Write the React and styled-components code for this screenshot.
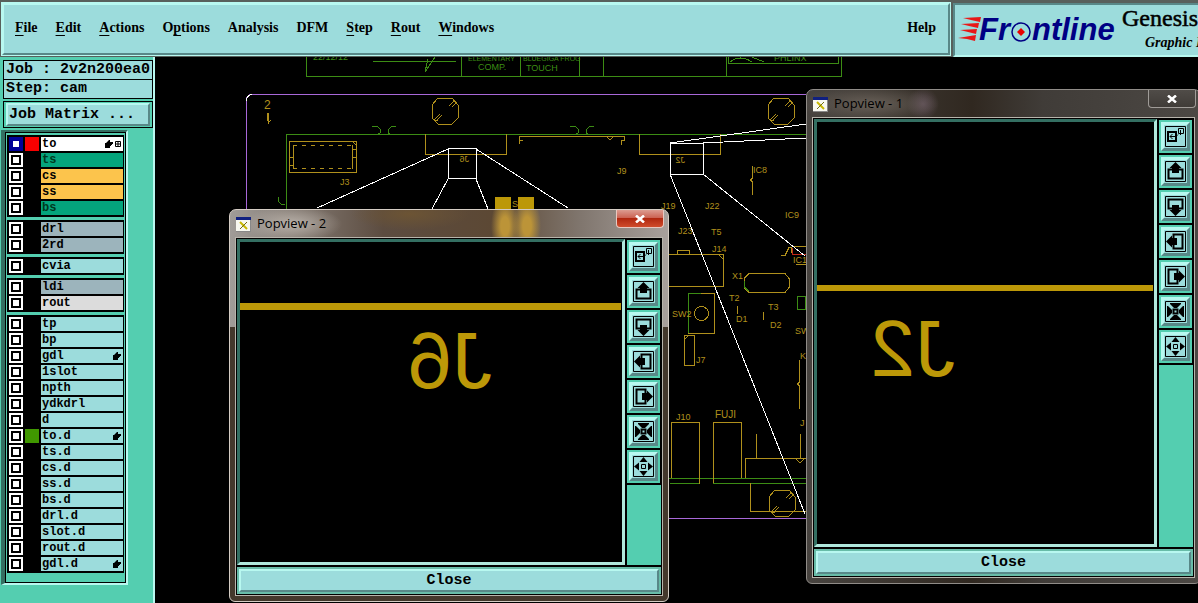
import React from 'react';
import styled, { createGlobalStyle, css } from 'styled-components';

const c = {
  teal: '#54ceb0',
  aqua: '#9cdcdc',
  dark: '#346f62',
  shade: '#588888',
  light: '#b8f8f0',
  gold: '#bc9808',
  wire: '#b0901c',
  green: '#3c8c14',
  purple: '#a868d8',
};
const mono = '"Liberation Mono", "DejaVu Sans Mono", monospace';
const serif = '"Liberation Serif", "DejaVu Serif", serif';

const Global = createGlobalStyle`
  *, *::before, *::after { box-sizing: border-box; }
  body { margin: 0; background: #000; color: #000; }
  button, input { font: inherit; color: inherit; margin: 0; padding: 0; border: 0; border-radius: 0; }
  h1, h2, p, ul { margin: 0; padding: 0; font-weight: inherit; }
`;

const bevel = css`
  border: 2px solid;
  border-color: ${c.light} ${c.shade} ${c.shade} ${c.light};
`;

const Page = styled.div`
  display: flex;
  flex-direction: column;
  height: 100vh;
  overflow: hidden;
`;

/* ---------- header ---------- */
const Header = styled.header`
  display: flex;
  flex: none;
  height: 57px;
  padding: 3px 0 0 2px;
  background: #58605c;
`;
const MenuBar = styled.nav`
  ${bevel}
  display: flex;
  flex: 1;
  align-items: center;
  gap: 18px;
  padding: 0 12px 2px 11px;
  margin-bottom: 2px;
  outline: 1px solid ${c.light};
  background: ${c.aqua};
`;
const MenuButton = styled.button`
  background: none;
  font: bold 14px/20px ${serif};
  margin-left: ${(p) => (p.$end ? 'auto' : '0')};
  -webkit-text-stroke: 0;
  u { text-underline-offset: 3px; text-decoration-thickness: 1px; }
`;
const Brand = styled.div`
  display: flex;
  flex: none;
  width: 245px;
  overflow: hidden;
  margin-left: 3px;
  border: solid;
  border-width: 2px 0 2px 2px;
  border-color: ${c.shade} transparent ${c.light} ${c.shade};
  background: ${c.aqua};
  svg { flex: none; }
`;
const Product = styled.div`
  white-space: nowrap;
  padding-left: 3px;
  h1 { font: 24px/26px ${serif}; -webkit-text-stroke: 0.5px #000; }
  p { padding-left: 23px; font: italic bold 14px/24px ${serif}; }
`;

/* ---------- sidebar ---------- */
const Body = styled.div`
  display: flex;
  flex: 1;
  min-height: 0;
`;
const Sidebar = styled.aside`
  display: flex;
  flex-direction: column;
  flex: none;
  width: 155px;
  padding: 3px 0 0 3px;
  border-right: 2px solid ${c.light};
  background: ${c.teal};
`;
const Info = styled.p`
  height: 20px;
  margin: 0 0 -1px;
  padding-left: 2px;
  border: 1px solid #000;
  background: ${c.aqua};
  font: bold 15px/18px ${mono};
  white-space: nowrap;
`;
const MatrixFrame = styled.div`
  margin-top: 3px;
  padding: 1px 2px;
  border: 1px solid #000;
`;
const MatrixButton = styled.button`
  ${bevel}
  display: block;
  width: 100%;
  height: 23px;
  padding-left: 1px;
  background: ${c.aqua};
  font: bold 15px/18px ${mono};
  text-align: left;
`;
const LayerPanel = styled.section`
  display: flex;
  flex-direction: column;
  gap: 3px;
  width: 127px;
  margin: 2px 0 0 -2px;
  padding: 3px 2px 10px;
  border: solid;
  border-width: 2px 2px 2px 4px;
  border-color: ${c.dark} ${c.light} ${c.light} ${c.dark};
  box-shadow: inset -1px -1px #000, inset 1px 1px #000;
`;
const LayerGroup = styled.ul`
  padding: 1px 1px 1px 2px;
  background: #000;
  list-style: none;
`;
const LayerRow = styled.li`
  display: flex;
  gap: 2px;
  height: 16px;
  padding: 1px 0;
`;
const Tick = styled.input.attrs({ type: 'checkbox' })`
  appearance: none;
  flex: none;
  width: 14px;
  height: 14px;
  border: 2px solid ${(p) => (p.$active ? '#000098' : '#fff')};
  background: #fff;
  box-shadow: inset 0 0 0 2px ${(p) => (p.$active ? '#000098' : '#000')};
`;
const Swatch = styled.span`
  flex: none;
  width: 14px;
  background: ${(p) => p.$color || '#000'};
`;
const LayerName = styled.label`
  display: flex;
  flex: 1;
  align-items: center;
  gap: 2px;
  padding: 0 2px 0 1px;
  background: ${(p) => p.$color || c.aqua};
  color: ${(p) => (p.$color === '#04a47c' ? '#003820' : '#000')};
  font: bold 12px/14px ${mono};
  span { flex: 1; }
`;

const groups = [
  [
    { name: 'to', color: '#fff', swatch: '#f80000', hand: true, grid: true, active: true },
    { name: 'ts', color: '#04a47c' },
    { name: 'cs', color: '#fcc44c' },
    { name: 'ss', color: '#fcc44c' },
    { name: 'bs', color: '#04a47c' },
  ],
  [{ name: 'drl', color: '#9cb4bc' }, { name: '2rd', color: '#9cb4bc' }],
  [{ name: 'cvia' }],
  [{ name: 'ldi', color: '#9cb4bc' }, { name: 'rout', color: '#dcdcdc' }],
  [
    { name: 'tp' }, { name: 'bp' }, { name: 'gdl', hand: true }, { name: '1slot' },
    { name: 'npth' }, { name: 'ydkdrl' }, { name: 'd' },
    { name: 'to.d', swatch: '#409800', hand: true },
    { name: 'ts.d' }, { name: 'cs.d' }, { name: 'ss.d' }, { name: 'bs.d' },
    { name: 'drl.d' }, { name: 'slot.d' }, { name: 'rout.d' }, { name: 'gdl.d', hand: true },
  ],
];

const Hand = () => (
  <svg width="8" height="8" viewBox="0 0 8 8" aria-hidden="true">
    <path d="M0 3h1l3-3h1v2h3v2H7v1H6v1H5v2H0z" />
  </svg>
);
const Grid = () => (
  <svg width="6" height="6" viewBox="0 0 6 6" aria-hidden="true">
    <path d="M.5.5h5v5h-5zM3 0v6M0 3h6" fill="none" stroke="#000" />
  </svg>
);

function Layer({ layer }) {
  const id = `layer-${layer.name}`;
  return (
    <LayerRow>
      <Tick id={id} $active={layer.active} />
      <Swatch $color={layer.swatch} />
      <LayerName htmlFor={id} $color={layer.color}>
        <span>{layer.name}</span>
        {layer.hand && <Hand />}
        {layer.grid && <Grid />}
      </LayerName>
    </LayerRow>
  );
}

/* ---------- workspace ---------- */
const Workspace = styled.main`
  position: relative;
  flex: 1;
  min-width: 0;
  overflow: hidden;
  background: #000;
`;
const Board = styled.svg`
  display: block;
  width: 100%;
  height: 100%;
  fill: none;
  stroke: ${c.wire};
  shape-rendering: crispEdges;
  text {
    fill: ${c.wire};
    stroke: none;
    font: 9px "Liberation Sans", sans-serif;
  }
  .green { stroke: ${c.green}; }
  text.green { fill: ${c.green}; stroke: none; }
  text.small { font-size: 7px; }
  .white { stroke: #fff; }
  .purple { stroke: ${c.purple}; }
`;

const labels = [
  ['2', 264, 109, 12], ['J3', 340, 185], ['J9', 617, 174], ['IC8', 753, 173], ['IC9', 785, 218],
  ['J22', 705, 209], ['J19', 661, 209], ['J23', 678, 234], ['T5', 711, 235], ['J14', 712, 252],
  ['X1', 732, 279], ['T2', 729, 301], ['T3', 768, 310], ['D1', 736, 322], ['D2', 770, 328],
  ['SW2', 672, 317], ['J7', 696, 363], ['SW', 795, 334], ['IC11', 793, 263], ['K', 800, 359],
  ['J', 800, 426], ['J10', 676, 420], ['FUJI', 715, 418, 10],
];

const Fiducial = ({ x, y }) => (
  <g transform={`translate(${x} ${y})`}>
    <path d="M-7-13H7L13-6V7L7 13H-7L-13 7V-6ZM4-5l5-5M7-4l5-5M-11 9l6-6M-8 9l5-5M-10 10l3-1" />
  </g>
);
const Hooks = ({ x }) => (
  <path className="green" d={`M${x - 13} 126h5l3 3v4l-2 1M${x + 11} 126h-4l-4 4v3l2 1`} />
);

function Pcb() {
  return (
    <Board viewBox="155 57 1043 546" preserveAspectRatio="xMinYMin slice" aria-label="Board view">
      <path className="green" d="M306.5 57V76.5H841.5V57M461.5 57V76M520.5 57V76M579.5 57V76M603.5 57V76M726.5 57V76M373 61.5h83M435 57l-10 15 3-13M728 57v6.5h110V57M730 62q10-8 22 0M752 57l12 5" />
      <text className="green" x="313" y="60">22/12/12</text>
      <text className="green small" x="468" y="61">ELEMENTARY</text>
      <text className="green small" x="523" y="61">BLUEGIGA FROG</text>
      <text className="green" x="774" y="61">PHLINX</text>
      <text className="green" x="478" y="70">COMP.</text>
      <text className="green" x="526" y="71">TOUCH</text>

      <path className="purple" d="M246.5 210V99.500q0-5 6-5H806M669 518.500H806" />
      <path className="white" d="M246.500 101q0-6 6-6.500" />
      <path d="M268.500 113v9M267.500 113v6l1 4 2-3" />
      <path className="green" d="M286.500 209V134.500H806M278 197v4l3 3h4M669 478.500H806M670 483.500h29M713 483.500H806" />
      <Hooks x={385} /><Hooks x={583} />
      <Fiducial x={445} y={111} /><Fiducial x={781} y={111} /><Fiducial x={782} y={503} />

      <path d="M289.500 141.500h67v31h-67zM289 157.500h4M289 165.500h4M353 149.500h4M353 157.500h4M352 141l4 4" />
      <path d="M293.500 145V168.500M352.500 145V168.500" />
      <path strokeDasharray="4 5" d="M293 145.500h60M293 168.500h60M297 141.500h55" />
      <path d="M425.500 134V154.500H506.500V134M639.500 134V154.500H720.500V134M519.500 144v-4h3M519.500 140v-3.500H624.500v4h-3v4M607 137l3 3 3-3" />
      <path fill={c.gold} stroke="none" d="M495 197h16v12h-16zM518 197h16v12h-16z" />
      <text x="512" y="207">S</text>
      <path d="M752.500 166v12l-2 2 2 2v13" />
      <path d="M669 254.500H723.500V286.500H669M677.500 254v-4h12v4M718 254l5 5M749 273.500h36l4 5v9l-4 5h-36l-5-5v-9zM737.500 306v8M763.500 312v8" />
      <path d="M688.500 293.500h26v40h-26zM684.500 335.500h10v30h-10zM684 340l5-5" />
      <path className="green" d="M688.500 333v-39.500h12M744.500 281v6l4 4M797.500 296.500h8v13h-8z" />
      <circle cx="701.500" cy="313.500" r="7" />
      <path d="M781 255.500h4l4-8h2v5M792 246.500h14M796 264.500h10M799.500 360v22l-2 2 2 2v23" />
      <path stroke="#c02818" d="M792.500 248v6h13" />
      <path d="M671.500 422.500h28v61M671.500 422v56M713.500 483v-60.500h28V478M745.500 478V458.500H806M756.500 434v24M800.500 434v24M796 459l4 4 4-4M750.500 483v28H806" />
      {labels.map(([t, x, y, size]) => (
        <text key={t + x} x={x} y={y} style={size ? { fontSize: size } : undefined}>{t}</text>
      ))}
      <text transform="translate(469 162) scale(-1 1)">J6</text>
      <text transform="translate(685 163) scale(-1 1)">J2</text>

      <path className="white" d="M448.500 148.500h28v30h-28zM448 149L317 208M476 149l92 59M448 179l-16 30M476 179l12 30" />
      <path className="white" d="M670.500 143.500h33v31h-33zM670 143l136-19M703 143l103-5M670 174l135 340M703 174l102 82" />
    </Board>
  );
}

/* ---------- popview windows ---------- */
const glass = {
  light: css`
    background:
      radial-gradient(ellipse 50px 18px at 62px 14px, #b8b0a8, transparent),
      radial-gradient(ellipse 14px 30px at 275px 16px, #bc9438 30%, transparent),
      radial-gradient(ellipse 14px 30px at 297px 16px, #bc9438 30%, transparent),
      radial-gradient(ellipse 60px 16px at 180px 4px, #6c5434, transparent),
      linear-gradient(#0000 117px, #44382c 117px),
      linear-gradient(90deg, #a09c98, #5c4c40 35%, #5c4834 60%, #80766e 80%, #a8a09c);
  `,
  dark: css`
    background:
      radial-gradient(ellipse 70px 18px at 62px 14px, #686058, transparent),
      radial-gradient(ellipse 16px 16px at 116px 14px, #605058, transparent),
      linear-gradient(90deg, #484440, #302820 42%, #403c38 60%, #4c4844);
  `,
};
const Popup = styled.section`
  position: absolute;
  display: flex;
  flex-direction: column;
  padding: 0 6px 6px;
  border: 1px solid ${(p) => (p.$tone === 'light' ? '#d4ccc4' : '#908c88')};
  border-radius: 7px 7px 6px 6px;
  ${(p) => glass[p.$tone]}
`;
const TitleBar = styled.header`
  display: flex;
  flex: none;
  gap: 6px;
  height: 28px;
  font: 13px/26px "Open Sans", sans-serif;
  svg { margin-top: 7px; }
  h2 { flex: 1; font: inherit; }
`;
const CloseX = styled.button`
  display: flex;
  justify-content: center;
  align-items: center;
  width: 48px;
  height: 18px;
  margin-right: -2px;
  border: 1px solid ${(p) => (p.$tone === 'light' ? '#e8c8c0' : '#a09c98')};
  border-top: 0;
  border-radius: 0 0 4px 4px;
  background: ${(p) => (p.$tone === 'light'
    ? 'linear-gradient(#dc9c90, #cc6454 45%, #b02810 50%, #d04c2c)'
    : 'linear-gradient(#504c48, #403c38)')};
  svg { margin: 0; }
`;
const Client = styled.div`
  display: flex;
  flex: 1;
  flex-direction: column;
  min-height: 0;
  gap: 2px;
  padding: 1px;
  outline: 1px solid #b8b4ac;
  background: #000;
`;
const ClientRow = styled.div`
  display: flex;
  flex: 1;
  min-height: 0;
  gap: 1px;
`;
const View = styled.svg`
  flex: 1;
  min-width: 0;
  height: 100%;
  border: 3px solid;
  border-color: ${c.dark} #b0e8dc #b0e8dc ${c.dark};
  background: #000;
  fill: ${c.gold};
  text { font: 80px "Liberation Sans", sans-serif; }
`;
const Tools = styled.div`
  display: flex;
  flex: none;
  flex-direction: column;
  gap: 2px;
  width: 35px;
  padding: 1px 0 0 1px;
  &::after { content: ''; flex: 1; background: ${c.teal}; }
`;
const ToolFrame = styled.span`
  display: block;
  flex: none;
  width: 33px;
  height: 33px;
  padding: 2px;
  background: ${c.teal};
`;
const ToolButton = styled.button`
  display: grid;
  place-items: center;
  width: 29px;
  height: 29px;
  border: 3px solid;
  border-color: ${c.light} ${c.shade} ${c.shade} ${c.light};
  background: ${c.aqua};
`;
const CloseFrame = styled.div`
  flex: none;
  padding: 2px;
  background: #68bca8;
`;
const CloseButton = styled.button`
  ${bevel}
  display: block;
  width: 100%;
  height: 23px;
  background: ${c.aqua};
  font: bold 15px/18px ${mono};
`;

const upArrow = (
  <>
    <path d="M7 8.500H3.500v9h14v-9H14" fill="none" stroke="#000" strokeWidth="2" />
    <path d="M10.500 1l6 6H14v5H7V7H4.500z" />
  </>
);
const inward = <path d="M5 2h11v1l-4 4H9L5 3z" />;
const outward = <path d="M10.500 1l4 5h-8z" />;
const turns = [0, 90, 180, 270];
const tools = [
  ['Copy view', (
    <g fill="none" stroke="#000">
      <path strokeWidth="2" d="M3 6h8v9H3z" />
      <path d="M13.500 2.500h5v5h-5zM15.500 4v5M13 8.500l-2 2H5M7.500 8L5 10.500 7.500 13" />
    </g>
  )],
  ['Pan up', upArrow],
  ['Pan down', <g transform="rotate(180 10.500 10.500)">{upArrow}</g>],
  ['Pan left', <g transform="rotate(270 10.500 10.500)">{upArrow}</g>],
  ['Pan right', <g transform="rotate(90 10.500 10.500)">{upArrow}</g>],
  ['Zoom out', (
    <>
      <path d="M8.500 8.500h4v4h-4z" fill="none" stroke="#000" strokeWidth="2" />
      {turns.map((r) => <g key={r} transform={`rotate(${r} 10.500 10.500)`}>{inward}</g>)}
    </>
  )],
  ['Zoom in', (
    <>
      <path d="M8.500 8.500h4v4h-4z" fill="none" stroke="#000" />
      {turns.map((r) => <g key={r} transform={`rotate(${r} 10.500 10.500)`}>{outward}</g>)}
    </>
  )],
];

const AppIcon = () => (
  <svg width="15" height="15" viewBox="0 0 15 15" aria-hidden="true">
    <path d="M0 0h15v15H0z" fill="#888" />
    <path d="M0 0h14v14H0z" fill="#f8f8f0" />
    <path d="M0 0h15v3H0z" fill="#102080" />
    <path d="M4 5l7 7" stroke="#c8b800" strokeWidth="2" />
    <path d="M11 5l-7 7" stroke="#706c10" />
  </svg>
);

function Popview({ n, tone, frame, children }) {
  return (
    <Popup $tone={tone} style={frame}>
      <TitleBar>
        <AppIcon />
        <h2>Popview - {n}</h2>
        <CloseX $tone={tone} aria-label="Close window">
          <svg width="10" height="8" viewBox="0 0 10 8">
            <path d="M1 .5l8 7M9 .5l-8 7" stroke="#fff" strokeWidth="2.500" />
          </svg>
        </CloseX>
      </TitleBar>
      <Client>
        <ClientRow>
          {children}
          <Tools>
            {tools.map(([name, art]) => (
              <ToolFrame key={name}>
                <ToolButton aria-label={name}>
                  <svg width="21" height="21" viewBox="0 0 21 21">
                    <path d="M.5.5h20v20H.5z" fill="none" stroke="#000" />
                    {art}
                  </svg>
                </ToolButton>
              </ToolFrame>
            ))}
          </Tools>
        </ClientRow>
        <CloseFrame><CloseButton>Close</CloseButton></CloseFrame>
      </Client>
    </Popup>
  );
}

const Logo = () => (
  <svg width="164" height="51" viewBox="955 4 164 51" role="img" aria-label="Frontline">
    <path fill="#e81818" d="M963 17l18-1-1 5-9-2zM961 23l18-1-1 5-9-2zM960 29l17-1-1 5-8-2zM958 37l18-3-1 6-8-2z" />
    <g fill="#000084" fontFamily="Liberation Sans, sans-serif" fontSize="31" fontWeight="bold" fontStyle="italic">
      <text x="979" y="39">Fr</text>
      <text x="1032" y="39">ntline</text>
    </g>
    <circle cx="1021" cy="31" r="9" fill="none" stroke="#000084" strokeWidth="1.500" />
    <path fill="#e80000" d="M1021 27l4 4-4 4-4-4z" />
  </svg>
);

export default function App() {
  return (
    <Page>
      <Global />
      <Header>
        <MenuBar>
          <MenuButton><u>F</u>ile</MenuButton>
          <MenuButton><u>E</u>dit</MenuButton>
          <MenuButton><u>A</u>ctions</MenuButton>
          <MenuButton>O<u>p</u>tions</MenuButton>
          <MenuButton>Analysis</MenuButton>
          <MenuButton>DFM</MenuButton>
          <MenuButton><u>S</u>tep</MenuButton>
          <MenuButton><u>R</u>out</MenuButton>
          <MenuButton><u>W</u>indows</MenuButton>
          <MenuButton $end>Help</MenuButton>
        </MenuBar>
        <Brand>
          <Logo />
          <Product>
            <h1>Genesis</h1>
            <p>Graphic Editor</p>
          </Product>
        </Brand>
      </Header>
      <Body>
        <Sidebar>
          <Info>Job : 2v2n200ea0</Info>
          <Info>Step: cam</Info>
          <MatrixFrame><MatrixButton>Job Matrix ...</MatrixButton></MatrixFrame>
          <LayerPanel>
            {groups.map((g) => (
              <LayerGroup key={g[0].name}>
                {g.map((l) => <Layer key={l.name} layer={l} />)}
              </LayerGroup>
            ))}
          </LayerPanel>
        </Sidebar>
        <Workspace>
          <Pcb />
          <Popview n={2} tone="light" frame={{ left: 74, top: 152, width: 440, height: 393 }}>
            <View viewBox="240 241 382 322" preserveAspectRatio="xMinYMin slice">
              <path d="M240 302h381v7H240z" />
              <text transform="translate(492 387) scale(-1 1)">J6</text>
            </View>
          </Popview>
          <Popview n={1} tone="dark" frame={{ left: 651, top: 32, width: 395, height: 495 }}>
            <View viewBox="817 122 337 424" preserveAspectRatio="xMinYMin slice">
              <path d="M817 285h336v6H817z" />
              <text transform="translate(955 376) scale(-1 1)">J2</text>
            </View>
          </Popview>
        </Workspace>
      </Body>
    </Page>
  );
}
